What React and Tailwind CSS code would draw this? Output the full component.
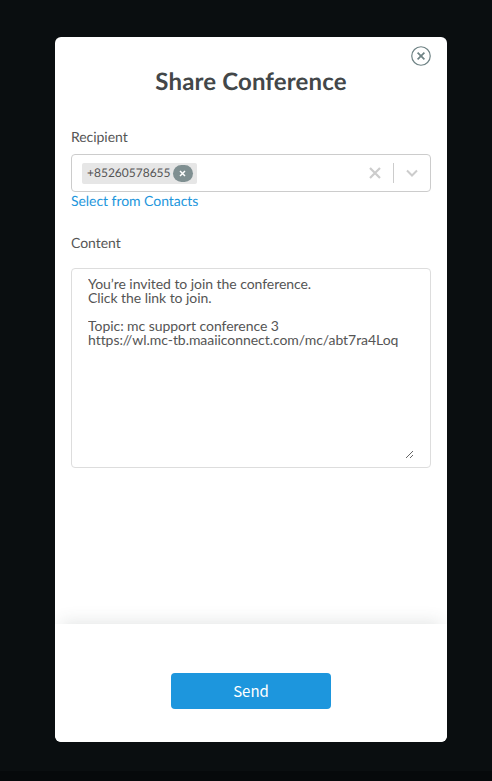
import React from 'react';

const message = `You’re invited to join the conference.
Click the link to join.

Topic: mc support conference 3
https://wl.mc-tb.maaiiconnect.com/mc/abt7ra4Loq`;

const CloseCircle = () => (
    <svg width="20" height="20" viewBox="0 0 20 20" fill="none" stroke="#6f8385">
        <circle cx="10" cy="10" r="9.25" strokeWidth="1.2" />
        <path d="M6.6 6.6l6.8 6.8M13.4 6.6l-6.8 6.8" strokeWidth="1.7" />
    </svg>
);

const RecipientSelect = () => (
    <div className="flex items-center h-[38px] border border-[#cccccc] rounded-[4px] bg-white">
        <div className="flex-1 flex items-center pl-[10px]">
            <div className="flex items-center h-[21px] bg-[#e6e6e6] rounded-[2px] pl-[5px] pr-[4px] text-[12px] tracking-normal text-[#555555]">
                +85260578655
                <span className="flex items-center justify-center ml-[2px] w-[20px] h-[17px] rounded-full bg-[#7f8f91]">
                    <svg width="7" height="7" viewBox="0 0 7 7" stroke="#ffffff" strokeWidth="1.5">
                        <path d="M1 1l5 5M6 1l-5 5" />
                    </svg>
                </span>
            </div>
        </div>
        <svg width="12" height="12" viewBox="0 0 12 12" stroke="#cccccc" strokeWidth="2.2" className="mr-[12px]">
            <path d="M1 1l10 10M11 1L1 11" />
        </svg>
        <span className="w-px h-[20px] bg-[#cccccc]" />
        <svg width="12" height="8" viewBox="0 0 12 8" fill="none" stroke="#cccccc" strokeWidth="2" className="mx-[12px]">
            <path d="M1 1.5l5 5 5-5" />
        </svg>
    </div>
);

export default function App() {
    return (
        <div className="h-[781px] flex flex-col font-['Lato',sans-serif] [text-rendering:geometricPrecision]">
            <div className="flex-1 bg-[#0a0e10] flex flex-col items-center pt-[37px] pl-[10px]">
                <div className="relative w-[392px] h-[705px] bg-white rounded-[6px] flex flex-col overflow-hidden">
                    <button className="absolute top-[9px] right-[16px]">
                        <CloseCircle />
                    </button>

                    <h1 className="mt-[28px] text-center text-[24px] tracking-[0.15px] leading-[34px] font-bold text-[#434749]">Share Conference</h1>

                    <div className="flex-1 px-[16px] pt-[29px] text-[14px] tracking-[-0.05px]">
                        <label className="block leading-[17px] text-[#555555] mb-[9px]">Recipient</label>
                        <RecipientSelect />
                        <a className="block leading-[17px] text-[#1d96dc]">Select from Contacts</a>

                        <label className="block mt-[25px] leading-[17px] text-[#555555] mb-[17px]">Content</label>
                        <div className="h-[200px] border border-[#dddddd] rounded-[4px] px-[16px] py-[8px]">
                            <textarea
                                readOnly
                                value={message}
                                className="block w-full h-full leading-[14px] text-[#555555] outline-none resize-y"
                            />
                        </div>
                    </div>

                    {/* Footer with the soft shadow on its top edge */}
                    <div className="h-[118px] flex justify-center pt-[49px] rounded-b-[6px] bg-white shadow-[0_-8px_16px_-6px_rgba(60,70,70,0.14)]">
                        <button className="w-[160px] h-[36px] rounded-[4px] bg-[#1d96dd] text-white text-[15px] font-['Noto_Sans_CJK_SC',sans-serif]">
                            Send
                        </button>
                    </div>
                </div>
            </div>
            <div className="h-[10px] bg-[#06090b]" />
        </div>
    );
}
